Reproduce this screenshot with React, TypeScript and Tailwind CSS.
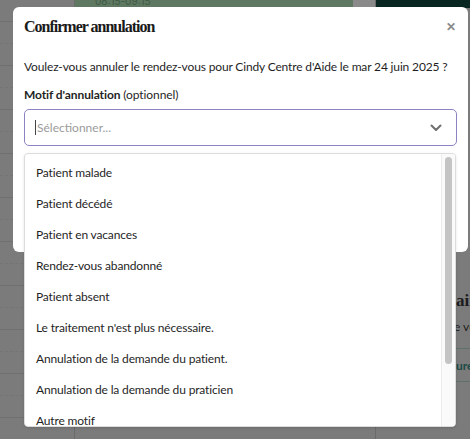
import React from "react";

const reasons = [
  "Patient malade",
  "Patient décédé",
  "Patient en vacances",
  "Rendez-vous abandonné",
  "Patient absent",
  "Le traitement n'est plus nécessaire.",
  "Annulation de la demande du patient.",
  "Annulation de la demande du praticien",
  "Autre motif",
];

// Dimmed calendar page sitting behind the dialog
function Backdrop() {
  const rows = Array.from({ length: 19 });
  return (
    <div className="flex h-[439px] w-[470px] bg-[#7b7b7b]">
      <div className="flex w-[75px] shrink-0 flex-col border-r border-[#6b6b6b]">
        {rows.map((_, i) => (
          <div
            key={i}
            className={i % 2 === 0 ? "h-[22px] shrink-0 border-b border-[#707070]" : "h-[22px] shrink-0 border-b border-dashed border-[#747474]"}
          />
        ))}
      </div>
      <div className="flex w-[278px] shrink-0 flex-col">
        <div className="h-[7px] overflow-hidden bg-[#5f7862] pl-[20px]">
          <div className="-mt-[5px] text-[10px] leading-[12px] text-[#3e5a44]" style={{ fontFamily: "Inter, sans-serif" }}>
            08:15-09:15
          </div>
        </div>
      </div>
      <div className="w-[23px] shrink-0 border-r border-[#6a6a6a]">
        <div className="h-[7px] bg-[#8a8a8a]" />
      </div>
      <div className="flex flex-1 flex-col">
        <div className="h-[8px] bg-[#0a2622]" />
        <div className="h-[282px]" />
        <div className="pl-[80px] text-[17px] font-bold leading-[22px] text-[#1c1c1c]" style={{ fontFamily: "'Liberation Serif', serif" }}>
          air
        </div>
        <div className="mt-[6px] pl-[78px] text-[12px] text-[#1e1e1e]" style={{ fontFamily: "Lato, sans-serif" }}>
          e ve
        </div>
        <div className="mt-[12px] border-t border-[#5e6f6c]" />
        <div className="pl-[80px] pt-[8px] text-[12px] font-bold text-[#1f4a45]" style={{ fontFamily: "Lato, sans-serif" }}>
          ure
        </div>
        <div className="mt-[6px] border-t border-[#5e6f6c]" />
      </div>
    </div>
  );
}

function Chevron() {
  return (
    <svg width="12" height="8" viewBox="0 0 12 8" fill="none">
      <path d="M1.5 1.5 L6 6 L10.5 1.5" stroke="#6f6f6f" strokeWidth="2" strokeLinecap="round" strokeLinejoin="round" />
    </svg>
  );
}

export default function App() {
  const sans = { fontFamily: "Lato, 'Noto Sans', sans-serif" };
  return (
    <div className="relative h-[439px] w-[470px] overflow-hidden">
      <Backdrop />

      {/* dialog */}
      <div
        className="absolute left-[13px] top-[7px] h-[245px] w-[455px] rounded-[6px] bg-white px-[11px] text-[#1f1f1f]"
        style={sans}
      >
        <div className="flex items-center justify-between pt-[10px]">
          <h2 className="text-[16px] font-bold leading-[20px] tracking-[-1px] text-[#1a1a1a]" style={{ fontFamily: "'Liberation Serif', serif" }}>
            Confirmer annulation
          </h2>
          <span className="mr-[1px] text-[12px] font-bold leading-[20px] text-[#8a8a8a]">✕</span>
        </div>
        <p className="mt-[21px] whitespace-nowrap text-[12px] leading-[18px] tracking-[-0.15px]">
          Voulez-vous annuler le rendez-vous pour Cindy Centre d'Aide le mar 24 juin 2025 ?
        </p>
        <p className="mt-[10px] text-[12px] leading-[18px] tracking-[-0.1px]">
          <span className="font-bold">Motif d'annulation</span> (optionnel)
        </p>
        <div className="mt-[5px] flex h-[37px] items-center justify-between rounded-[5px] border border-[#8c84c2] pl-[10px] pr-[14px]">
          <div className="flex items-center">
            <div className="h-[15px] w-px bg-[#444]" />
            <span className="ml-[1px] text-[12px] text-[#9b9b9b]">Sélectionner...</span>
          </div>
          <Chevron />
        </div>
      </div>

      {/* options menu */}
      <div
        className="absolute left-[24px] top-[153px] flex h-[274px] w-[432px] overflow-hidden rounded-[4px] border border-[#dcdcdc] bg-white shadow-sm"
        style={sans}
      >
        <ul className="flex-1 pl-[11px] pt-[3px]">
          {reasons.map(r => (
            <li key={r} className="flex h-[31px] items-center text-[12px] tracking-[-0.15px] text-[#1f1f1f]">
              {r}
            </li>
          ))}
        </ul>
        <div className="w-[14px] border-l border-[#ececec] bg-[#fafafa] px-[3px] pt-[3px]">
          <div className="h-[207px] rounded-full bg-[#c4c4c4]" />
        </div>
      </div>
    </div>
  );
}
